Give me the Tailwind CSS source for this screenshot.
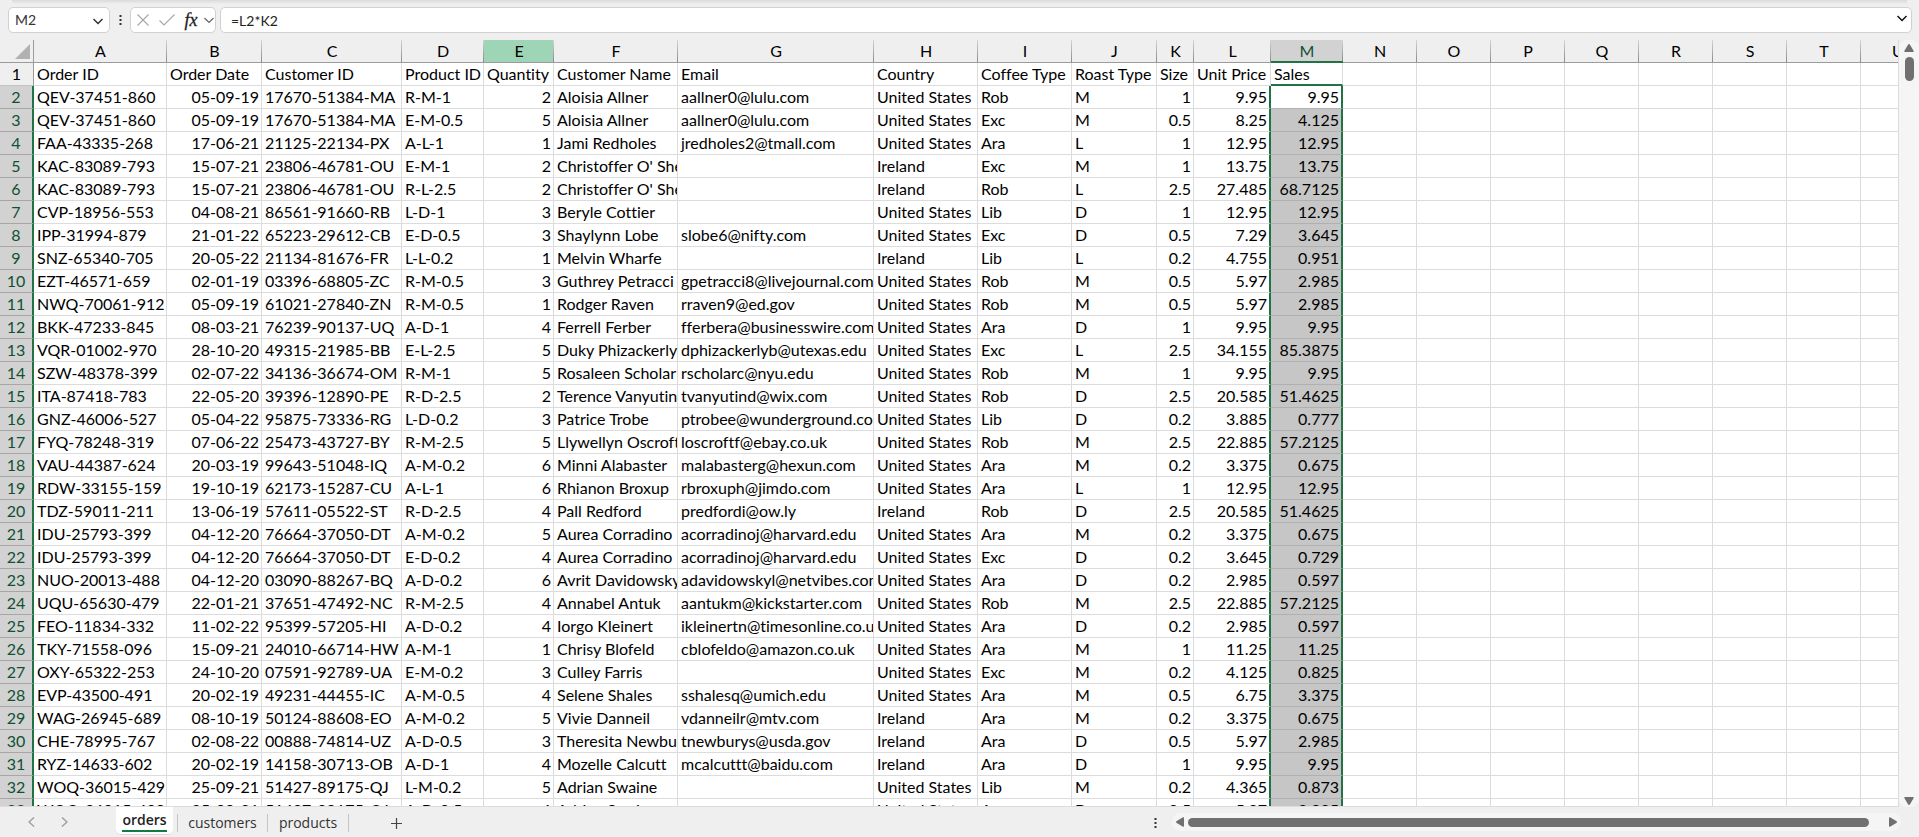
<!DOCTYPE html>
<html lang="en">
<head>
<meta charset="utf-8">
<title>orders</title>
<script src="https://cdn.jsdelivr.net/npm/@tailwindcss/browser@4"></script>
</head>
<body class="h-screen overflow-hidden flex flex-col bg-[#efefef] text-black font-['Lato','Noto_Sans',sans-serif] [font-variant-ligatures:none]">

<header class="shrink-0 h-10 flex flex-col">
  <div class="h-1 mx-3 bg-linear-to-b from-[#dadada] to-[#efefef]"></div>
  <div class="flex items-stretch h-[26px] mt-[3px] pl-2 pr-[7px]">
    <div class="w-[102px] shrink-0 flex items-center bg-white border border-[#d1d1d1] rounded-[5px] pr-[3px]">
      <input aria-label="Name box" value="M2" class="flex-1 min-w-0 pl-1.5 text-sm text-[#333] outline-none">
      <button aria-label="Open name list" class="size-4 mt-0.5 grid place-items-center"><svg class="w-2.5 h-[7px]" viewBox="0 0 10 7" fill="none" stroke="#333" stroke-width="1.5"><path d="M.5 1 5 5.500 9.500 1"/></svg></button>
    </div>
    <div class="w-5 shrink-0 grid place-items-center" aria-hidden="true"><svg class="w-[3px] h-3" viewBox="0 0 3 12" fill="#333"><path d="M.5 1h2v2h-2zM.5 5h2v2h-2zM.5 9h2v2h-2z"/></svg></div>
    <div class="w-[86px] shrink-0 flex items-center bg-white border border-[#d1d1d1] rounded-[5px] pl-1.5">
      <button aria-label="Cancel" class="w-3 grid place-items-center"><svg class="w-3 h-3" viewBox="0 0 12 12" fill="none" stroke="#a9a9a9" stroke-width="1.2"><path d="M.5.5l11 11M11.500.5l-11 11"/></svg></button>
      <button aria-label="Enter" class="w-4 ml-2.5 grid place-items-center"><svg class="w-4 h-3" viewBox="0 0 16 12" fill="none" stroke="#a9a9a9" stroke-width="1.2"><path d="M.5 6.500 5 11 15.500.5"/></svg></button>
      <button aria-label="Insert function" class="w-4 ml-2 text-lg leading-5 italic text-[#222] font-['Liberation_Serif',serif] [-webkit-text-stroke:0.3px_#222]">fx</button>
      <button aria-label="Function list" class="w-3 ml-1 grid place-items-center"><svg class="w-2.5 h-[7px]" viewBox="0 0 10 7" fill="none" stroke="#666" stroke-width="1.2"><path d="M.5 1 5 5.500 9.500 1"/></svg></button>
    </div>
    <div class="flex-1 min-w-0 ml-1 flex items-start bg-white border border-[#d1d1d1] rounded-[5px] pr-0.5">
      <input aria-label="Formula" value="=L2*K2" class="flex-1 min-w-0 h-6 pl-2.5 text-sm text-[#222] outline-none">
      <button aria-label="Expand formula bar" class="mt-[3px] size-3.5 grid place-items-center"><svg class="w-2.5 h-[7px]" viewBox="0 0 10 7" fill="none" stroke="#111" stroke-width="1.5"><path d="M.5 1 5 5.500 9.500 1"/></svg></button>
    </div>
  </div>
</header>

<main class="flex-1 min-h-0 flex">
  <div class="flex-1 min-w-0 overflow-hidden border-r border-b border-[#dcdcdc]">
    <table class="table-fixed border-separate border-spacing-0 w-[1935px] text-base leading-5 whitespace-nowrap">
      <colgroup id="cols"></colgroup>
      <thead><tr id="letters"></tr></thead>
      <tbody id="rows" class="bg-white"></tbody>
    </table>
  </div>
  <div class="w-5 shrink-0 flex flex-col items-center bg-[#f5f5f5] rounded-lg" role="scrollbar" aria-label="Vertical" aria-controls="rows" aria-valuenow="0">
    <svg class="w-2.5 h-2 mt-1" viewBox="0 0 10 8" fill="#707070"><path d="M5 0q.6 0 1 .7L9.700 7q.3 1-.7 1H1Q0 8 .3 7L4 .7Q4.400 0 5 0z"/></svg>
    <div class="w-[9px] h-6 mt-[5px] rounded-full bg-[#707070]"></div>
    <svg class="w-2.5 h-2 mt-auto mb-0.5" viewBox="0 0 10 8" fill="#707070"><path d="M5 8q.6 0 1-.7L9.700 1Q10 0 9 0H1Q0 0 .3 1L4 7.300Q4.400 8 5 8z"/></svg>
  </div>
</main>

<footer class="shrink-0 h-[30px] flex items-start font-['Open_Sans','Noto_Sans',sans-serif] text-sm text-[#333]">
  <div class="w-[116px] h-[30px] flex items-center pl-7">
    <button aria-label="Previous sheet"><svg class="w-[7px] h-2.5" viewBox="0 0 7 10" fill="none" stroke="#a0a0a0" stroke-width="1.5"><path d="M6 .5 1 5l5 4.500"/></svg></button>
    <button aria-label="Next sheet" class="ml-[26px]"><svg class="w-[7px] h-2.5" viewBox="0 0 7 10" fill="none" stroke="#a0a0a0" stroke-width="1.5"><path d="M1 .5 6 5 1 9.500"/></svg></button>
  </div>
  <button class="w-[57px] h-7 flex flex-col items-center bg-white rounded-b-[5px] border-b border-[#d8d8d8]"><span class="h-[25px] leading-[25px] border-b-2 border-[#107c41] font-semibold text-[#222]">orders</span></button>
  <div class="flex items-center pt-[7px] pl-1">
    <button class="h-[18px] leading-[18px] w-[90px] border-l border-[#c4c4c4]">customers</button>
    <button class="h-[18px] leading-[18px] w-[82px] border-x border-[#c4c4c4]">products</button>
    <button aria-label="New sheet" class="ml-[42px]"><svg class="w-[11px] h-[11px]" viewBox="0 0 11 11" stroke="#444" stroke-width="1.2"><path d="M5.500 0v11M0 5.500h11"/></svg></button>
  </div>
  <div class="ml-auto flex items-center h-[30px] pr-[18px]">
    <svg class="w-[3px] h-3 mt-0.5 mr-[15px]" viewBox="0 0 3 12" fill="#333"><path d="M.5 1h2v2h-2zM.5 5h2v2h-2zM.5 9h2v2h-2z"/></svg>
    <div class="w-[38vw] h-[18px] flex items-center rounded-full bg-[#f5f5f5] px-1" role="scrollbar" aria-label="Horizontal" aria-controls="rows" aria-valuenow="0">
      <svg class="w-2 h-2.5 shrink-0" viewBox="0 0 8 10" fill="#707070"><path d="M0 5q0-.6.7-1L7 .3Q8 0 8 1v8q0 1-1 .7L.7 6Q0 5.600 0 5z"/></svg>
      <div class="flex-1 ml-1 mr-5 h-[9px] rounded-full bg-[#707070]"></div>
      <svg class="w-2 h-2.5 shrink-0" viewBox="0 0 8 10" fill="#707070"><path d="M8 5q0-.6-.7-1L1 .3Q0 0 0 1v8q0 1 1 .7L7.300 6Q8 5.600 8 5z"/></svg>
    </div>
  </div>
</footer>

<script>
const widths = [34,133,95,140,82,70,124,196,104,94,85,37,77,72,74,74,74,74,74,74,74,74];
const letters = ["","A","B","C","D","E","F","G","H","I","J","K","L","M","N","O","P","Q","R","S","T","U"];
const header = ["Order ID","Order Date","Customer ID","Product ID","Quantity","Customer Name","Email","Country","Coffee Type","Roast Type","Size","Unit Price","Sales"];
const US = "United States", IE = "Ireland";
const data = [
["QEV-37451-860","05-09-19","17670-51384-MA","R-M-1",2,"Aloisia Allner","aallner0@lulu.com",US,"Rob","M","1","9.95","9.95"],
["QEV-37451-860","05-09-19","17670-51384-MA","E-M-0.5",5,"Aloisia Allner","aallner0@lulu.com",US,"Exc","M","0.5","8.25","4.125"],
["FAA-43335-268","17-06-21","21125-22134-PX","A-L-1",1,"Jami Redholes","jredholes2@tmall.com",US,"Ara","L","1","12.95","12.95"],
["KAC-83089-793","15-07-21","23806-46781-OU","E-M-1",2,"Christoffer O' Shea","",IE,"Exc","M","1","13.75","13.75"],
["KAC-83089-793","15-07-21","23806-46781-OU","R-L-2.5",2,"Christoffer O' Shea","",IE,"Rob","L","2.5","27.485","68.7125"],
["CVP-18956-553","04-08-21","86561-91660-RB","L-D-1",3,"Beryle Cottier","",US,"Lib","D","1","12.95","12.95"],
["IPP-31994-879","21-01-22","65223-29612-CB","E-D-0.5",3,"Shaylynn Lobe","slobe6@nifty.com",US,"Exc","D","0.5","7.29","3.645"],
["SNZ-65340-705","20-05-22","21134-81676-FR","L-L-0.2",1,"Melvin Wharfe","",IE,"Lib","L","0.2","4.755","0.951"],
["EZT-46571-659","02-01-19","03396-68805-ZC","R-M-0.5",3,"Guthrey Petracci","gpetracci8@livejournal.com",US,"Rob","M","0.5","5.97","2.985"],
["NWQ-70061-912","05-09-19","61021-27840-ZN","R-M-0.5",1,"Rodger Raven","rraven9@ed.gov",US,"Rob","M","0.5","5.97","2.985"],
["BKK-47233-845","08-03-21","76239-90137-UQ","A-D-1",4,"Ferrell Ferber","fferbera@businesswire.com",US,"Ara","D","1","9.95","9.95"],
["VQR-01002-970","28-10-20","49315-21985-BB","E-L-2.5",5,"Duky Phizackerly","dphizackerlyb@utexas.edu",US,"Exc","L","2.5","34.155","85.3875"],
["SZW-48378-399","02-07-22","34136-36674-OM","R-M-1",5,"Rosaleen Scholar","rscholarc@nyu.edu",US,"Rob","M","1","9.95","9.95"],
["ITA-87418-783","22-05-20","39396-12890-PE","R-D-2.5",2,"Terence Vanyutin","tvanyutind@wix.com",US,"Rob","D","2.5","20.585","51.4625"],
["GNZ-46006-527","05-04-22","95875-73336-RG","L-D-0.2",3,"Patrice Trobe","ptrobee@wunderground.com",US,"Lib","D","0.2","3.885","0.777"],
["FYQ-78248-319","07-06-22","25473-43727-BY","R-M-2.5",5,"Llywellyn Oscroft","loscroftf@ebay.co.uk",US,"Rob","M","2.5","22.885","57.2125"],
["VAU-44387-624","20-03-19","99643-51048-IQ","A-M-0.2",6,"Minni Alabaster","malabasterg@hexun.com",US,"Ara","M","0.2","3.375","0.675"],
["RDW-33155-159","19-10-19","62173-15287-CU","A-L-1",6,"Rhianon Broxup","rbroxuph@jimdo.com",US,"Ara","L","1","12.95","12.95"],
["TDZ-59011-211","13-06-19","57611-05522-ST","R-D-2.5",4,"Pall Redford","predfordi@ow.ly",IE,"Rob","D","2.5","20.585","51.4625"],
["IDU-25793-399","04-12-20","76664-37050-DT","A-M-0.2",5,"Aurea Corradino","acorradinoj@harvard.edu",US,"Ara","M","0.2","3.375","0.675"],
["IDU-25793-399","04-12-20","76664-37050-DT","E-D-0.2",4,"Aurea Corradino","acorradinoj@harvard.edu",US,"Exc","D","0.2","3.645","0.729"],
["NUO-20013-488","04-12-20","03090-88267-BQ","A-D-0.2",6,"Avrit Davidowsky","adavidowskyl@netvibes.com",US,"Ara","D","0.2","2.985","0.597"],
["UQU-65630-479","22-01-21","37651-47492-NC","R-M-2.5",4,"Annabel Antuk","aantukm@kickstarter.com",US,"Rob","M","2.5","22.885","57.2125"],
["FEO-11834-332","11-02-22","95399-57205-HI","A-D-0.2",4,"Iorgo Kleinert","ikleinertn@timesonline.co.uk",US,"Ara","D","0.2","2.985","0.597"],
["TKY-71558-096","15-09-21","24010-66714-HW","A-M-1",1,"Chrisy Blofeld","cblofeldo@amazon.co.uk",US,"Ara","M","1","11.25","11.25"],
["OXY-65322-253","24-10-20","07591-92789-UA","E-M-0.2",3,"Culley Farris","",US,"Exc","M","0.2","4.125","0.825"],
["EVP-43500-491","20-02-19","49231-44455-IC","A-M-0.5",4,"Selene Shales","sshalesq@umich.edu",US,"Ara","M","0.5","6.75","3.375"],
["WAG-26945-689","08-10-19","50124-88608-EO","A-M-0.2",5,"Vivie Danneil","vdanneilr@mtv.com",IE,"Ara","M","0.2","3.375","0.675"],
["CHE-78995-767","02-08-22","00888-74814-UZ","A-D-0.5",3,"Theresita Newbury","tnewburys@usda.gov",IE,"Ara","D","0.5","5.97","2.985"],
["RYZ-14633-602","20-02-19","14158-30713-OB","A-D-1",4,"Mozelle Calcutt","mcalcuttt@baidu.com",IE,"Ara","D","1","9.95","9.95"],
["WOQ-36015-429","25-09-21","51427-89175-QJ","L-M-0.2",5,"Adrian Swaine","",US,"Lib","M","0.2","4.365","0.873"],
["WOQ-36015-429","25-09-21","51427-89175-QJ","A-D-0.5",6,"Adrian Swaine","",US,"Ara","D","0.5","5.97","2.985"]
];
const rightCols = [1,4,10,11,12];
const base = "h-[23px] p-0 overflow-hidden font-normal ";
// Column headings carry a divider that darkens towards the grid.
const divider = "bg-[linear-gradient(to_bottom,#d4d4d4,#8a8a8a)] bg-no-repeat bg-right bg-size-[1px_100%] ";
document.getElementById("cols").innerHTML = widths.map(w => `<col style="width:${w}px">`).join("");
document.getElementById("letters").innerHTML = letters.map((l, i) => {
  if (i === 0) return `<td class="${base}border-r border-b border-[#9b9b9b]"><svg class="ml-auto mr-[3px] w-[15px] h-[15px]" viewBox="0 0 15 15" fill="#b1b1b1"><path d="M15 0v15H0z"/></svg></td>`;
  let look = "border-b border-[#9b9b9b]";
  if (l === "E") look = "bg-[#9fd5b7] border-b border-[#9b9b9b]";
  if (l === "M") look = "bg-[#d2d2d2] text-[#0f5132] border-b-2 border-[#217346]";
  return `<th scope="col" class="${base}${divider}${look}">${l}</th>`;
}).join("");
document.getElementById("rows").innerHTML = [header, ...data].map((row, r) => {
  const num = r === 0
    ? "bg-[#efefef] border-r border-b border-r-[#9b9b9b] border-b-[#c4c4c4]"
    : "bg-[#d2d2d2] text-[#0f5132] border-r-2 border-b border-r-[#217346] border-b-[#a6a6a6]";
  let html = `<th scope="row" class="${base}${num}">${r + 1}</th>`;
  for (let c = 0; c < 21; c++) {
    let look = "border-r border-b border-[#dcdcdc] ";
    if (c === 12 && r === 0) look = "border-r border-b-2 border-r-[#dcdcdc] border-b-[#217346] ";
    if (c === 12 && r === 1) look = "border-r-2 border-b border-r-[#217346] border-b-[#b0b0b0] ";
    if (c === 12 && r > 1) look = "border-r-2 border-b border-r-[#217346] border-b-[#b0b0b0] bg-[#c6c6c6] ";
    if (c === 11 && r > 0) look = "border-r-2 border-b border-r-[#217346] border-b-[#dcdcdc] ";
    const side = r > 0 && rightCols.includes(c) ? "text-right pr-0.5" : "text-left pl-[3px]";
    html += `<td class="${base}${look}${side}">${row[c] ?? ""}</td>`;
  }
  return `<tr>${html}</tr>`;
}).join("");
</script>
</body>
</html>
